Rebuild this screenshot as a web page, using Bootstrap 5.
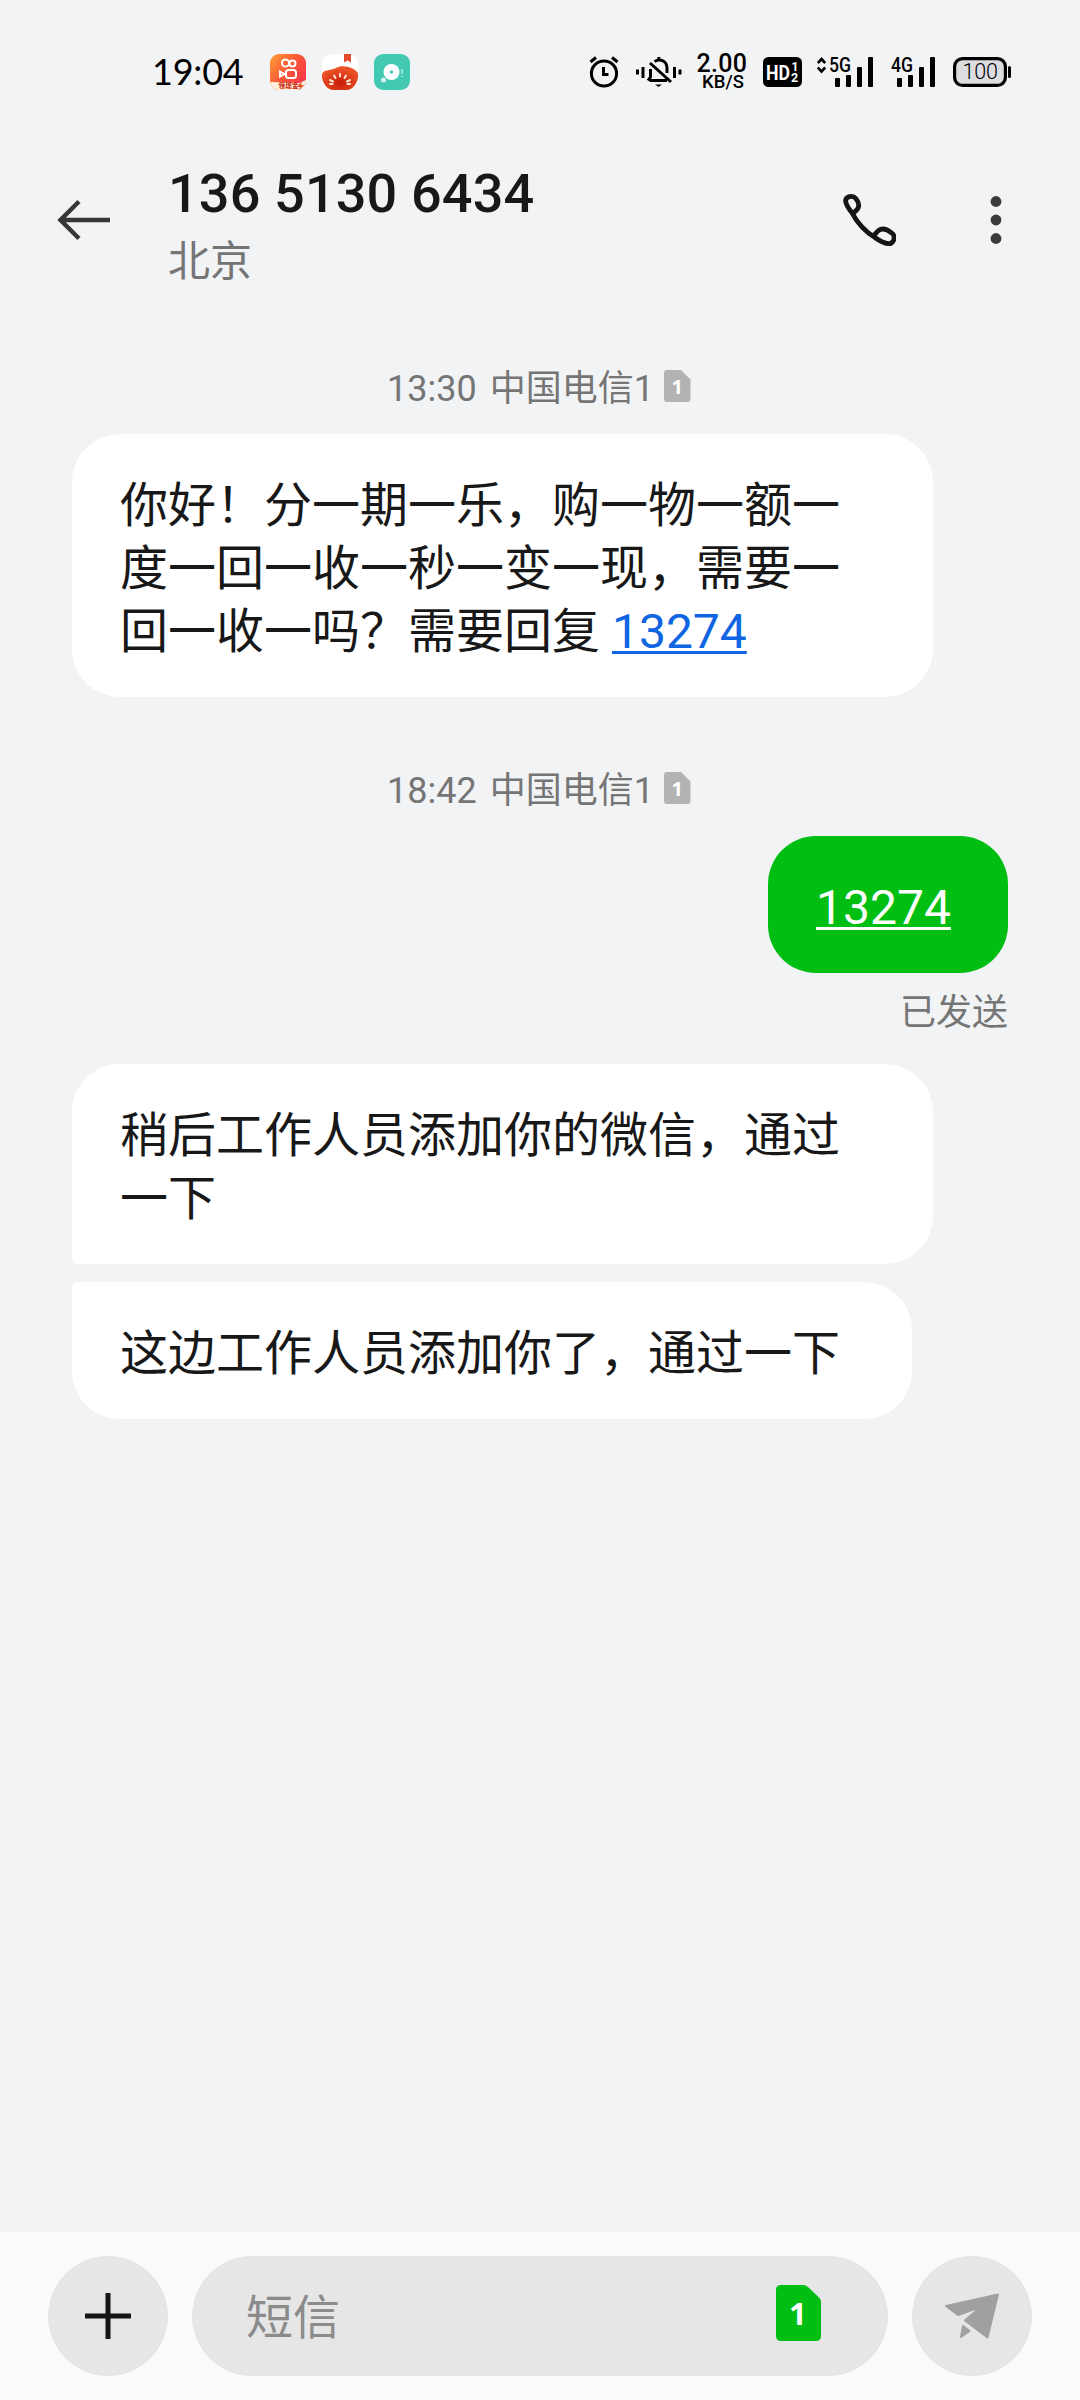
<!DOCTYPE html>
<html lang="zh-CN">
<head>
<meta charset="utf-8">
<meta name="viewport" content="width=device-width, initial-scale=1">
<title>136 5130 6434</title>
<link href="https://cdn.jsdelivr.net/npm/bootstrap@5.3.0/dist/css/bootstrap.min.css" rel="stylesheet">
<style>
body{background:#f2f3f5;color:#181818;font-family:Roboto,"Noto Sans CJK SC",sans-serif;overflow:hidden}
svg{display:block;flex:none}
.screen{width:1080px;height:2400px}
.statusbar{height:144px;padding:0 69px 0 152px;color:#000}
.clock{font:400 36px/36px Lato,sans-serif;width:118px;letter-spacing:-.2px;padding-bottom:2px}
.apps{gap:16px}
.speed{width:52px;margin-left:14px;font-weight:500;text-align:center;padding-top:1px}
.rate{font-size:25px;line-height:20px;letter-spacing:.3px}
.unit{font-size:18.5px;line-height:17px;padding-left:2px}
.topbar{height:152px;padding:0 78px 0 56px}
.peer{margin-left:56px;padding-top:13px}
.peer h1{font-size:54px;line-height:64px;font-weight:500;margin:0;letter-spacing:.15px}
.peer p{font-size:42px;line-height:60px;margin:6px 0 0;color:#757575}
.thread{padding:64px 72px 0}
.meta{font-size:36px;line-height:54px;color:#757575;padding-right:2px}
.meta .gapless{margin-right:10px;word-spacing:4px;padding-top:2px;margin-bottom:-2px}
.meta svg{margin-bottom:2px}
.bubble{background:#fff;border-radius:48px;padding:40px 48px 34px;font-size:48px;line-height:63px}
.wide{width:861px}
.mid{width:840px}
.join-b{border-bottom-left-radius:6px}
.join-t{border-top-left-radius:6px;margin-top:18px}
.bubble a{color:#0f65e2;text-decoration-thickness:3px;text-underline-offset:3px}
.bubble.sent{background:#00be12;width:240px}
.bubble.sent a{color:#fff}
.state{font-size:36px;line-height:54px;color:#757575;margin:13px 0 24px}
.composer{height:168px;background:#fbfbfb;padding:24px 48px;gap:24px}
.round-btn{width:120px;height:120px;background:#e6e6e6}
.field{background:#e6e6e6;height:120px;padding:0 67px 0 54px;color:#8b8b8b;font-size:47px}
.field span{padding-top:5px}
</style>
<script src="https://cdn.jsdelivr.net/npm/bootstrap@5.3.0/dist/js/bootstrap.bundle.min.js"></script>
</head>
<body>
<div class="screen d-flex flex-column">
  <div class="statusbar d-flex align-items-center">
    <div class="clock">19:04</div>
    <div class="apps d-flex">
      <svg width="36" height="36" viewBox="0 0 36 36">
        <defs><linearGradient id="ks" x1="0" y1="0" x2="1" y2=".7"><stop offset="0" stop-color="#ffa23a"/><stop offset=".5" stop-color="#fb5a35"/><stop offset="1" stop-color="#f6354c"/></linearGradient>
        <clipPath id="rc"><rect width="36" height="36" rx="9"/></clipPath></defs>
        <g clip-path="url(#rc)"><rect width="36" height="36" fill="url(#ks)"/>
        <path d="M0 28L29 29L36 26V36H0Z" fill="#fff1dc"/>
        <g fill="none" stroke="#fff" stroke-width="2"><circle cx="15.500" cy="9" r="3.600"/><circle cx="22.500" cy="9.500" r="3"/><rect x="16" y="16" width="10" height="8" rx="2.500"/><path d="M10 17.500L14.500 20L10 22.500Z"/></g></g>
        <text x="8.500" y="33.800" font-size="6.500" font-weight="900" fill="#c9301a" textLength="20" font-family="Noto Sans CJK SC">领现金</text>
        <path d="M32 27L27 33H30L29 36L34 31H31Z" fill="#df4a28"/>
      </svg>
      <svg width="36" height="36" viewBox="0 0 36 36">
        <defs><radialGradient id="tm" cx=".5" cy=".7" r=".6"><stop offset="0" stop-color="#c51e08"/><stop offset="1" stop-color="#ee5328"/></radialGradient></defs>
        <rect width="36" height="36" rx="9" fill="#fff"/><path d="M22 0H29V8.500L25.500 6.500L22 8.500Z" fill="#e44b2c"/>
        <path d="M0 20C2 15 9 17 15 13.500C22 10 33 14 36 19C37 28 31 36 25 36H11C5 36-1 28 0 20Z" fill="url(#tm)"/>
        <g stroke="#ffe4d2" stroke-width="2" stroke-linecap="round"><path d="M18 20V22.500M12 21.500L13.500 24M24 21.500L22.500 24M8 26L11 27.500M28 26L25 27.500M8 30H10.500M28 30H25.500"/></g>
      </svg>
      <svg width="36" height="36" viewBox="0 0 36 36"><rect width="36" height="36" rx="9" fill="#43c9b3"/><circle cx="17.500" cy="18" r="8" fill="#fff"/><circle cx="17.500" cy="18" r="1.700" fill="#43c9b3"/><circle cx="9.500" cy="26" r="2.500" fill="#d4f4ed"/><path d="M28 15V20M28 22V23" stroke="#bceee4" stroke-width="1.500"/></svg>
    </div>
    <svg class="ms-auto" width="30" height="32" viewBox="0 0 30 32" fill="none" stroke="#000"><circle cx="15" cy="17.500" r="12.600" stroke-width="3"/><path d="M14.500 11V18.500H19.500" stroke-width="3"/><path d="M1.500 6L7 1.500M28.500 6L23 1.500" stroke-width="3"/></svg>
    <svg style="margin-left:17px" width="46" height="32" viewBox="0 0 46 32" fill="none" stroke="#000" stroke-width="3"><path d="M1.500 13.500V18.500M7 11V22M38.500 11V22M44 13.500V18.500"/><path d="M13.500 24.500H31M12 24.500L14.500 21V13M18.500 5.500C25 1.500 31 6 31 12V17M22.800 4V1M14 7L35 26" /><path d="M19 28.500H26L22.500 31Z" fill="#000" stroke="none"/></svg>
    <div class="speed"><div class="rate">2.00</div><div class="unit">KB/S</div></div>
    <svg style="margin-left:15px" width="39" height="30" viewBox="0 0 39 30"><rect width="39" height="30" rx="5.500"/><g fill="#fff" font-family="Roboto" font-weight="700"><text x="3" y="23" font-size="21" textLength="24" lengthAdjust="spacingAndGlyphs">HD</text><text x="28.500" y="13.500" font-size="12">1</text><text x="28" y="25" font-size="12.500">2</text></g></svg>
    <svg style="margin-left:15px" width="57" height="42" viewBox="0 -6 57 42"><path d="M.8 6L4.500 2L8.200 6M.8 10.500L4.500 14.500L8.200 10.500" fill="none" stroke="#000" stroke-width="2.600"/><text x="12" y="14.500" font-family="Roboto" font-weight="500" font-size="20" textLength="22" lengthAdjust="spacingAndGlyphs">5G</text><rect x="18" y="21" width="5" height="9" rx="1"/><rect x="29" y="18" width="5" height="12" rx="1"/><rect x="40" y="10" width="5" height="20" rx="1"/><rect x="51" width="5" height="30" rx="1"/></svg>
    <svg style="margin-left:17px" width="45" height="42" viewBox="0 -6 45 42"><text x="0" y="14.500" font-family="Roboto" font-weight="500" font-size="20" textLength="22" lengthAdjust="spacingAndGlyphs">4G</text><rect x="6" y="21" width="5" height="9" rx="1"/><rect x="17" y="18" width="5" height="12" rx="1"/><rect x="28" y="10" width="5" height="20" rx="1"/><rect x="39" width="5" height="30" rx="1"/></svg>
    <svg style="margin-left:17px" width="58" height="30" viewBox="0 0 58 30"><rect x="1.600" y="1.600" width="50.800" height="26.800" rx="8" fill="#dcdde0" stroke="#000" stroke-width="3.200"/><rect x="55" y="9" width="3" height="12" rx="1.500"/><text x="9.500" y="22.300" font-family="Roboto" font-weight="300" font-size="21.500" textLength="35.500">100</text></svg>
  </div>

  <header class="topbar d-flex align-items-center">
    <svg width="56" height="44" viewBox="0 0 56 44" fill="none" stroke="#373737" stroke-width="4.500"><path d="M54 22H4M23 3.500L4.500 22L23 40.500"/></svg>
    <div class="peer"><h1>136 5130 6434</h1><p>北京</p></div>
    <svg class="ms-auto" width="54" height="54" viewBox="0 0 54 54" fill="none" stroke="#151515" stroke-width="4.800" stroke-linejoin="round"><path d="M10 19.800C6.500 15.500 4 11.500 3.600 8C3.600 3.500 10.500 1.500 13.800 5.500C17.500 10 17.500 13 15.500 16C13.500 18 12 19.500 10.500 21.500M10 19.800C16 31 24 39 33 44.500C39 49 45 51 48.500 50.500C53.500 48 53 42 49.500 39.800C44 35.500 40 35 36.500 37.500C34 39.500 33 42 30.500 43"/></svg>
    <svg style="margin-left:94px" width="12" height="50" viewBox="0 0 12 50" fill="#3b3b3d"><circle cx="6" cy="6.500" r="5.400"/><circle cx="6" cy="25" r="5.400"/><circle cx="6" cy="43.500" r="5.400"/></svg>
  </header>

  <main class="thread flex-grow-1 d-flex flex-column align-items-start">
    <div class="meta d-flex align-items-center align-self-center"><span class="gapless">13:30 中国电信1</span><svg width="27" height="32" viewBox="0 0 27 32"><path d="M3 0H17L26.500 9.500V29Q26.500 32 23.500 32H3Q0 32 0 29V3Q0 0 3 0Z" fill="#b3b3b3"/><text x="7.500" y="23.500" font-family="Noto Sans" font-weight="700" font-size="20" fill="#fff">1</text></svg></div>
    <div class="bubble wide" style="margin-top:20px">你好！分一期一乐，购一物一额一<br>度一回一收一秒一变一现，需要一<br>回一收一吗？需要回复 <a href="#">13274</a></div>
    <div class="meta d-flex align-items-center align-self-center" style="margin-top:65px"><span class="gapless">18:42 中国电信1</span><svg width="27" height="32" viewBox="0 0 27 32"><path d="M3 0H17L26.500 9.500V29Q26.500 32 23.500 32H3Q0 32 0 29V3Q0 0 3 0Z" fill="#b3b3b3"/><text x="7.500" y="23.500" font-family="Noto Sans" font-weight="700" font-size="20" fill="#fff">1</text></svg></div>
    <div class="bubble sent align-self-end" style="margin-top:20px"><a href="#">13274</a></div>
    <div class="state align-self-end">已发送</div>
    <div class="bubble wide join-b">稍后工作人员添加你的微信，通过<br>一下</div>
    <div class="bubble mid join-t">这边工作人员添加你了，通过一下</div>
  </main>

  <footer class="composer d-flex align-items-center">
    <div class="round-btn rounded-circle d-flex align-items-center justify-content-center"><svg width="46" height="46" viewBox="0 0 46 46"><path d="M23 0V46M0 23H46" stroke="#151515" stroke-width="5"/></svg></div>
    <div class="field rounded-pill flex-grow-1 d-flex align-items-center justify-content-between"><span>短信</span><svg style="margin-bottom:6px" width="45" height="56" viewBox="0 0 45 56"><path d="M5 0H27Q30 0 32 2L43 12.500Q45 14.500 45 17V51Q45 56 40 56H5Q0 56 0 51V5Q0 0 5 0Z" fill="#00be12"/><text x="13" y="40" font-family="Noto Sans" font-weight="700" font-size="31" fill="#fff">1</text></svg></div>
    <div class="round-btn rounded-circle d-flex align-items-center justify-content-center"><svg width="56" height="46" viewBox="0 0 56 46" fill="#a0a0a0" stroke="#a0a0a0" stroke-width="2" stroke-linejoin="round"><path d="M2 13L54 1.500L43.500 44.500L21 27.500L36.500 14L14 22ZM19 33L25.500 38L17 44Z"/></svg></div>
  </footer>
</div>
</body>
</html>
